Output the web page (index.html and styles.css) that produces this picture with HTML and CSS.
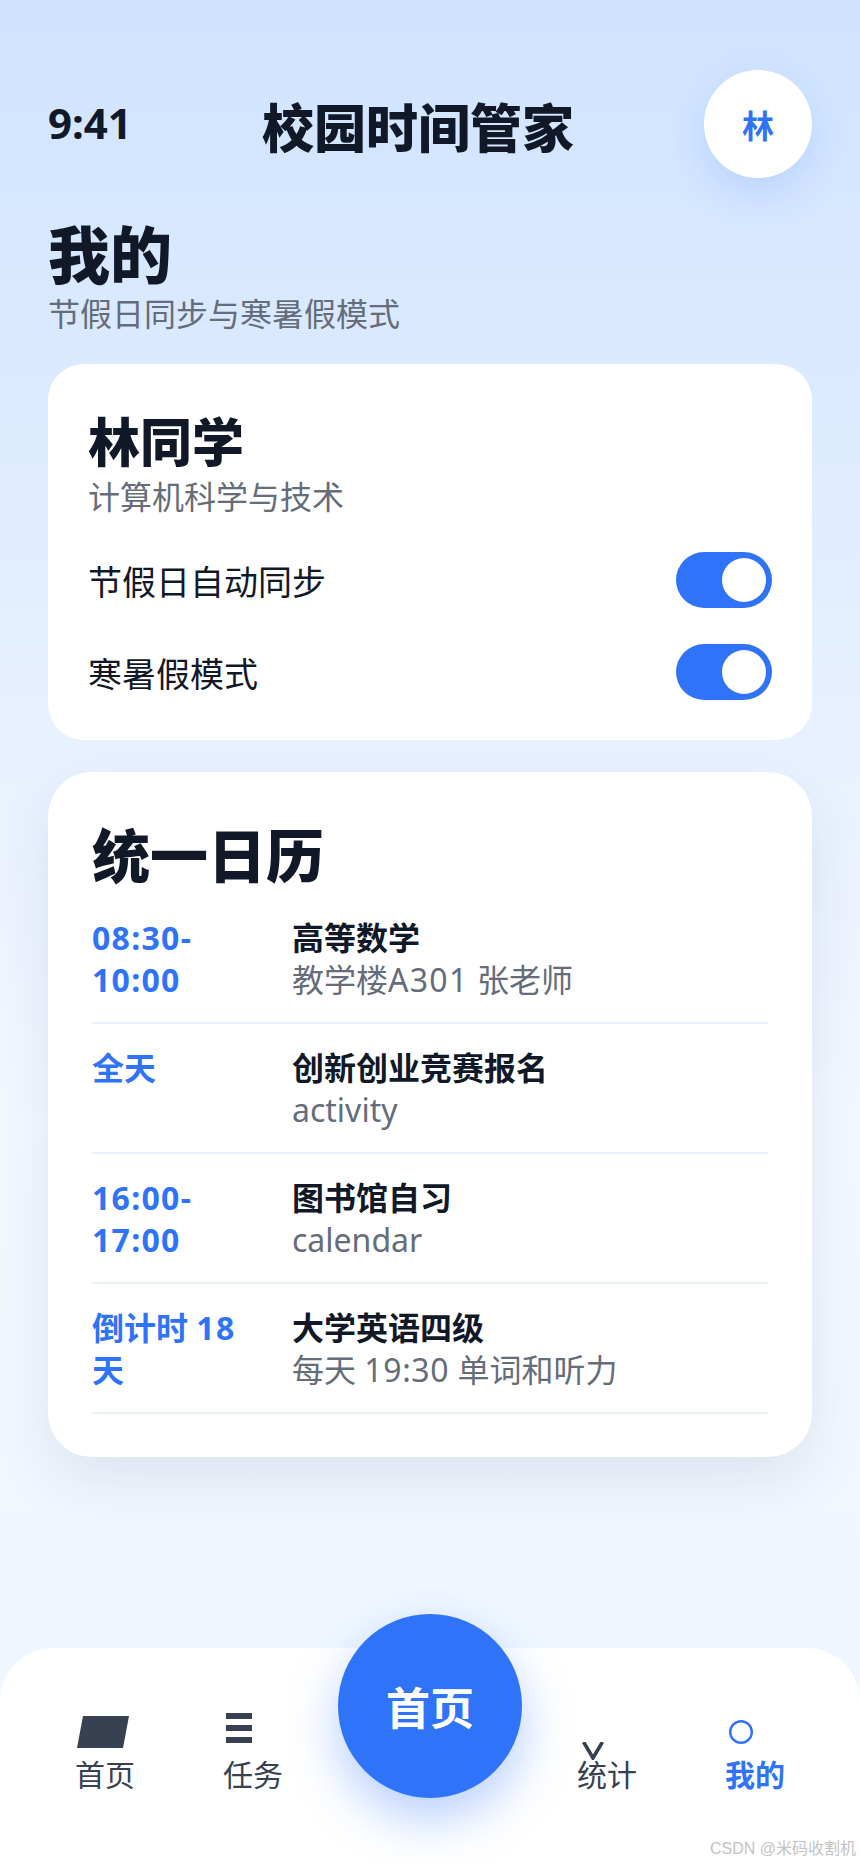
FILE: index.html
```html
<!DOCTYPE html>
<html lang="zh-CN">
<head>
    <title>校园时间管家</title>
    <meta charset="UTF-8">
    <link rel="stylesheet" href="styles.css">
</head>
<body>

<div class="page">
    <div class="topbar">
        <div class="clock">9:41</div>
        <div class="app-title">校园时间管家</div>
        <div class="avatar">林</div>
    </div>

    <div class="page-head">
        <h1>我的</h1>
        <p>节假日同步与寒暑假模式</p>
    </div>

    <div class="card profile">
        <h2>林同学</h2>
        <p class="major">计算机科学与技术</p>
        <div class="setting">
            <span>节假日自动同步</span>
            <div class="toggle"><i></i></div>
        </div>
        <div class="setting">
            <span>寒暑假模式</span>
            <div class="toggle"><i></i></div>
        </div>
    </div>

    <div class="card calendar">
        <h2>统一日历</h2>
        <div class="event">
            <div class="when"><span class="num">08:30-10:00</span></div>
            <div>
                <div class="what">高等数学</div>
                <div class="where">教学楼<span class="num">A301</span> 张老师</div>
            </div>
        </div>
        <div class="event">
            <div class="when">全天</div>
            <div>
                <div class="what">创新创业竞赛报名</div>
                <div class="where">activity</div>
            </div>
        </div>
        <div class="event">
            <div class="when"><span class="num">16:00-17:00</span></div>
            <div>
                <div class="what">图书馆自习</div>
                <div class="where">calendar</div>
            </div>
        </div>
        <div class="event">
            <div class="when">倒计时 <span class="num">18</span> 天</div>
            <div>
                <div class="what">大学英语四级</div>
                <div class="where">每天 <span class="num-tight">19:30</span> 单词和听力</div>
            </div>
        </div>
    </div>

    <div class="tabbar">
        <div class="tab">
            <svg class="icon-home" width="52" height="32" viewBox="0 0 52 32"><path d="M6 0H52L46 32H0Z" fill="#374151"/></svg>
            <span>首页</span>
        </div>
        <div class="tab">
            <svg class="icon-bars" width="26" height="30" viewBox="0 0 26 30"><path d="M0 0H26V6H0ZM0 12H26V18H0ZM0 24H26V30H0Z" fill="#374151"/></svg>
            <span>任务</span>
        </div>
        <div class="fab">首页</div>
        <div class="tab">
            <svg class="icon-chevron" width="22" height="18" viewBox="0 0 22 18"><path d="M1.6 0L11 16L20.4 0" fill="none" stroke="#374151" stroke-width="3.6"/></svg>
            <span>统计</span>
        </div>
        <div class="tab active">
            <svg class="icon-ring" width="24" height="24" viewBox="0 0 24 24"><circle cx="12" cy="12" r="10.8" fill="none" stroke="#2f74f8" stroke-width="2.4"/></svg>
            <span>我的</span>
        </div>
    </div>

    <div class="watermark">CSDN @米码收割机</div>
</div>

</body>
</html>
```

FILE: styles.css
```css
*{
    box-sizing: border-box;
}

body{
    margin: 0;
    font-family: "Noto Sans", "Noto Sans CJK SC", sans-serif;
    color: #111827;
}

.page{
    position: relative;
    width: 860px;
    height: 1864px;
    padding: 70px 48px 0;
    overflow: hidden;
    background: linear-gradient(180deg, #cfe3ff 0%, #f4f8ff 60%, #eef6ff 100%);
}

h1, h2, p{
    margin: 0;
}

.topbar{
    display: flex;
    justify-content: space-between;
    align-items: center;
    height: 108px;
}

.clock{
    font-size: 42px;
    font-weight: 700;
    line-height: 56px;
    margin-top: -2px;
}

.app-title{
    font-size: 52px;
    font-weight: 900;
    line-height: 68px;
    margin-top: 7px;
}

.avatar{
    width: 108px;
    height: 108px;
    border-radius: 50%;
    background: #fff;
    color: #2f74f8;
    font-size: 32px;
    font-weight: 700;
    display: flex;
    align-items: center;
    justify-content: center;
    box-shadow: 0 16px 40px rgba(47, 116, 248, 0.16);
}

.page-head{
    margin-top: 40px;
}

.page-head h1{
    font-size: 62px;
    font-weight: 900;
    line-height: 75px;
}

.page-head p{
    font-size: 32px;
    line-height: 42px;
    color: #656c7a;
}

.card{
    background: #fff;
}

.profile{
    margin-top: 29px;
    height: 376px;
    padding: 44px 40px 0;
    border-radius: 36px;
}

.profile h2{
    font-size: 52px;
    font-weight: 900;
    line-height: 68px;
}

.major{
    font-size: 32px;
    line-height: 42px;
    margin-bottom: 34px;
    color: #656c7a;
}

.setting{
    display: flex;
    align-items: center;
    justify-content: space-between;
    height: 56px;
    font-size: 34px;
}

.setting + .setting{
    margin-top: 36px;
}

.toggle{
    width: 96px;
    height: 56px;
    border-radius: 28px;
    background: #2f74f8;
    padding: 6px;
    display: flex;
    justify-content: flex-end;
}

.toggle i{
    width: 44px;
    height: 44px;
    border-radius: 50%;
    background: #fff;
}

.calendar{
    margin-top: 32px;
    height: 685px;
    padding: 46px 44px 0;
    border-radius: 44px;
    box-shadow: 0 24px 60px rgba(17, 39, 90, 0.09);
}

.calendar h2{
    font-size: 58px;
    font-weight: 900;
    line-height: 76px;
    margin-bottom: 23px;
}

.event{
    display: grid;
    grid-template-columns: 160px 1fr;
    column-gap: 40px;
    padding-bottom: 21px;
    border-bottom: 2px solid #e8f0fa;
    font-size: 32px;
    line-height: 42px;
}

.event + .event{
    padding-top: 23px;
}

.when{
    color: #2f74f8;
    font-weight: 700;
}

.what{
    font-weight: 700;
}

.where{
    color: #656c7a;
}

.num{
    letter-spacing: 1.3px;
}

.num-tight{
    letter-spacing: 0.6px;
}

.tabbar{
    position: absolute;
    left: 0;
    right: 0;
    bottom: 0;
    height: 216px;
    padding: 0 31px;
    background: #fff;
    border-radius: 54px 54px 0 0;
    display: grid;
    grid-template-columns: 148px 148px 1fr 148px 148px;
}

.tab{
    display: flex;
    flex-direction: column;
    align-items: center;
    justify-content: flex-end;
    height: 147px;
    font-size: 30px;
    line-height: 40px;
    color: #374151;
}

.icon-home{
    margin: 0 0 7px -5px;
}

.icon-bars{
    margin: 0 0 12px -28px;
}

.icon-chevron{
    margin: 0 0 -5px -28px;
}

.icon-ring{
    margin: 0 0 11px -28px;
}

.tab.active{
    color: #2f74f8;
    font-weight: 700;
}

.fab{
    justify-self: center;
    width: 184px;
    height: 184px;
    margin-top: -34px;
    border-radius: 50%;
    background: #2f74f8;
    color: #fff;
    font-size: 44px;
    font-weight: 700;
    display: flex;
    align-items: center;
    justify-content: center;
    box-shadow: 0 20px 50px rgba(47, 116, 248, 0.35);
}

.watermark{
    position: absolute;
    right: 4px;
    bottom: 4px;
    font-family: "Liberation Sans", "Noto Sans CJK SC", sans-serif;
    font-size: 16px;
    line-height: 22px;
    color: #c4c4c4;
}
```
